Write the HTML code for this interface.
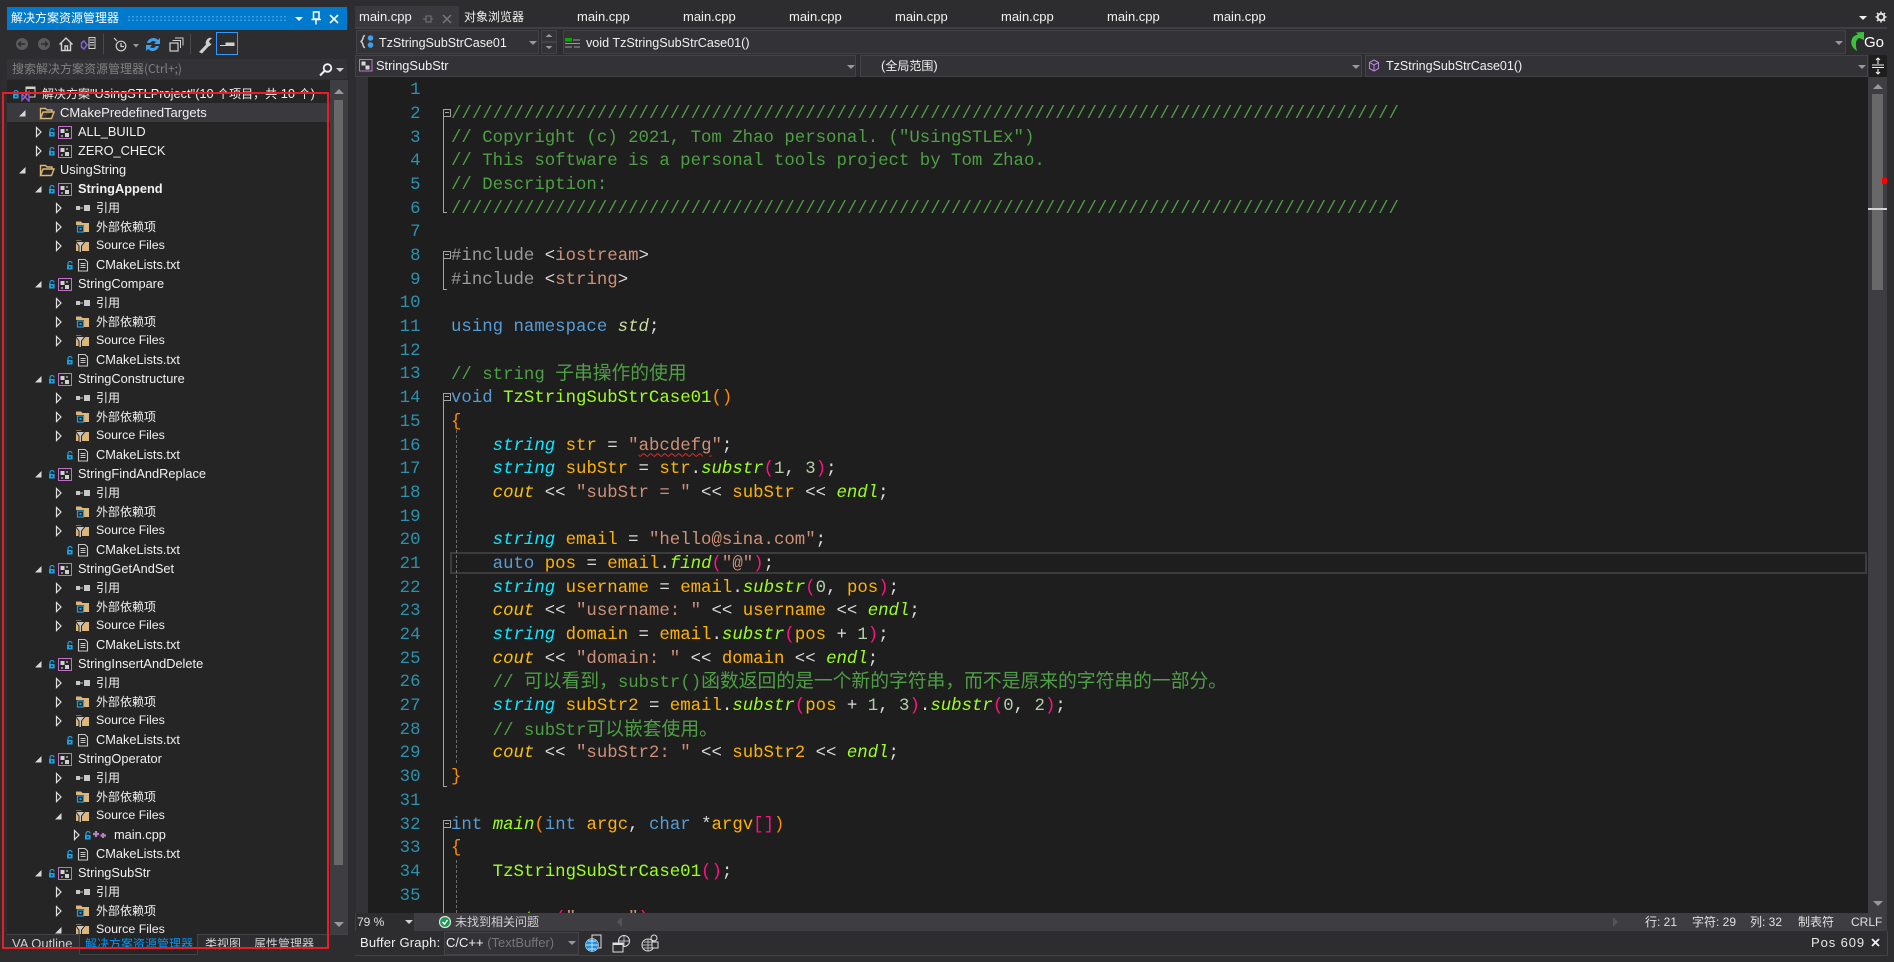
<!DOCTYPE html>
<html><head><meta charset="utf-8">
<style>
html,body{margin:0;padding:0;background:#2d2d30;width:1894px;height:962px;overflow:hidden}
body{position:relative;font:13px "Liberation Sans","Noto Sans CJK SC",sans-serif;color:#f1f1f1}
.a,.abs{position:absolute}
.z{font-family:"Noto Sans CJK SC",sans-serif;font-size:12px}
svg{position:absolute;overflow:visible}
.tx{position:absolute;white-space:pre;line-height:18px}
/* tree */
#tree{position:absolute;left:7px;top:80px;width:326px;height:854px;background:#252526;overflow:hidden}
#rows{position:absolute;left:-7px;top:4px;width:333px}
.r{position:relative;height:19px;line-height:19px;white-space:pre;font-size:12.8px}
.r svg{width:16px;height:16px;top:1.5px}
.r .T{position:absolute;top:0;color:#f1f1f1}
.A1 .A{left:30px}.A1 .K{left:44px}.A1 .I{left:57px}.A1 .T{left:78px}
.B1 .A{left:50px}.B1 .I{left:75px}.B1 .T{left:96px;font-size:12.4px}.B1 .z{font-size:12px}
.C1 .K{left:62px}.C1 .I{left:75px}.C1 .T{left:96px}
.F1 .A{left:14px}.F1 .I{left:39px}.F1 .T{left:60px}
.M1 .A{left:68px}.M1 .K{left:80px}.M1 .I{left:93px}.M1 .T{left:114px}
/* code */
#ed{position:absolute;left:368px;top:77px;width:1500px;height:836px;background:#1e1e1e;overflow:hidden}
#nums,#code{position:absolute;margin:0;top:2.2px;font:17.36px/23.7px "Liberation Mono","Noto Sans CJK SC",monospace}
#nums{left:0;width:52.5px;text-align:right;color:#2b91af}
#code{left:83px;color:#dcdcdc}
#code div{height:23.7px;white-space:pre}
#nums div{height:23.7px}
.c{color:#4e9f45}.t{color:#0fe6ff;font-style:italic}.v{color:#ffb300}.f{color:#9dff1f;font-style:italic}
.g{color:#9dff1f}.s{color:#ce9178}.k{color:#569cd6}.p{color:#ff1280}.q{color:#ff8c00}.o{color:#ffc000;font-style:italic}
.n{color:#b5cea8}.i{color:#9b9b9b}.d{color:#c8dca0;font-style:italic}.w{color:#dcdcdc}
.h{font-family:"Noto Sans CJK SC",sans-serif;font-size:18.8px;line-height:1}
.sq{text-decoration:underline wavy #e03030 1px;text-underline-offset:3px}
.bx{position:absolute;box-sizing:border-box;background:#333337;border:1px solid #434346}
.dd{position:absolute;width:0;height:0;border-left:4px solid transparent;border-right:4px solid transparent;border-top:4px solid #999}
.tab{position:absolute;top:8px;font-size:13px;line-height:18px}
.fb{position:absolute;left:75px;width:1px;background:#a5a5a5}
.tk{position:absolute;left:75px;width:4px;height:1px;background:#a5a5a5}
.fx{position:absolute;left:75px;box-sizing:border-box;width:8px;height:8px;border:1px solid #a5a5a5;background:#1e1e1e}
.fx:after{content:"";position:absolute;left:1px;top:2px;width:4px;height:1px;background:#a5a5a5}
.gd{position:absolute;left:88px;width:0;border-left:1px dashed #6e6e6e}
</style></head><body>
<svg width="0" height="0" style="position:absolute">
<defs>
<symbol id="ar" viewBox="0 0 16 16"><path d="M6.5 3.5L11 8L6.5 12.5Z" fill="none" stroke="#e0e0e0" stroke-width="1.2"/></symbol>
<symbol id="dn" viewBox="0 0 16 16"><path d="M11.5 5V11.5H5Z" fill="#d8d8d8"/></symbol>
<symbol id="lk" viewBox="0 0 16 16"><path d="M6 8.5V6.5a2 2 0 0 1 4 0" fill="none" stroke="#1ba1e2" stroke-width="1.2"/><rect x="5" y="8" width="5.6" height="4.5" fill="#1ba1e2"/><rect x="7" y="9.5" width="1.6" height="1.5" fill="#252526"/></symbol>
<symbol id="pj" viewBox="0 0 16 16"><rect x="1.5" y="2.5" width="13" height="12" fill="none" stroke="#c070c8" stroke-width="1"/><path d="M3.5 5h4v4h-4zM8 9h4v4H8z" fill="#d0d0d0"/><path d="M9 5h2v2H9zM4 11h2v2H4z" fill="#8a8a8a"/></symbol>
<symbol id="fo" viewBox="0 0 16 16"><path d="M1.5 13.5V3.5H6.5L8 5H13V7M1.5 13.5H12.5L15 7H4L1.5 13.5Z" fill="#252526" stroke="#dcb67a" stroke-width="1.4"/></symbol>
<symbol id="rf" viewBox="0 0 16 16"><rect x="1" y="6" width="4" height="4" fill="#c8c8c8"/><rect x="5" y="7.5" width="3" height="1" fill="#c8c8c8"/><rect x="9" y="5" width="6" height="6" fill="#c8c8c8"/></symbol>
<symbol id="ex" viewBox="0 0 16 16"><path d="M1 2.5H6L7.5 4H14V13H1Z" fill="#dcb67a"/><rect x="1" y="6" width="8" height="8" fill="#252526"/><rect x="2.5" y="7" width="6" height="6" fill="none" stroke="#1ba1e2" stroke-width="1.2"/><rect x="4.5" y="9" width="2" height="2" fill="#1ba1e2"/></symbol>
<symbol id="sf" viewBox="0 0 16 16"><path d="M1 2.5H6L7.5 4H14V13H1Z" fill="#dcb67a"/><path d="M0.5 3.5H10L6.5 8V14L4 15V8Z" fill="#c8c8c8" stroke="#252526" stroke-width="1"/></symbol>
<symbol id="fl" viewBox="0 0 16 16"><path d="M3.5 2.5H10L12.5 5V14H3.5Z" fill="none" stroke="#c8c8c8" stroke-width="1.1"/><path d="M5.5 6.5H10.5M5.5 8.5H10.5M5.5 10.5H10.5" stroke="#c8c8c8" stroke-width="1"/></symbol>
<symbol id="cp" viewBox="0 0 16 16"><path d="M3 4V10M0 7H6M10 6V11M7.5 8.5H13" stroke="#b77fc0" stroke-width="2.2" fill="none"/></symbol>
<symbol id="so" viewBox="0 0 16 16"><rect x="6" y="1" width="9" height="10" fill="none" stroke="#d0d0d0"/><rect x="6" y="1" width="9" height="2" fill="#d0d0d0"/><path d="M2 8L5 11L9 6V15L5 11L2 14Z" fill="#252526" stroke="#8a5fd0" stroke-width="1.4"/></symbol>
</defs></svg>

<!-- Solution explorer title -->
<div class="abs" style="left:7px;top:7px;width:340px;height:23px;background:#007acc"></div>
<div class="tx z" style="left:11px;top:9px;color:#fff">解决方案资源管理器</div>
<div class="abs" style="left:127px;top:15px;width:160px;height:7px;background-image:radial-gradient(#4aa6e0 0.8px,transparent 1px);background-size:4px 3.5px"></div>
<div class="dd" style="left:295px;top:17px;border-top-color:#fff;border-left-width:4px;border-right-width:4px"></div>
<svg style="left:310px;top:11px" width="12" height="14"><path d="M3.5 1H9V8H3.5ZM1.5 8.5H11M6 9V13.5" fill="none" stroke="#fff" stroke-width="1.5"/></svg>
<svg style="left:329px;top:14px" width="10" height="10"><path d="M1 1L9 9M9 1L1 9" stroke="#fff" stroke-width="1.6"/></svg>

<!-- toolbar -->
<svg style="left:0;top:30px" width="240" height="26">
<circle cx="22" cy="14" r="6" fill="#5a5a5c"/><path d="M25 14H19M21 11.5L18.5 14L21 16.5" stroke="#2d2d30" stroke-width="1.4" fill="none"/>
<circle cx="44" cy="14" r="6" fill="#5a5a5c"/><path d="M41 14H47M45 11.5L47.5 14L45 16.5" stroke="#2d2d30" stroke-width="1.4" fill="none"/>
<path d="M59.5 14.5L66 8L72.5 14.5M61.5 13V20.5H70.5V13M65 20.5V16H67.5V20.5" fill="none" stroke="#d0d0d0" stroke-width="1.4"/>
<path d="M84 11L87 15L84 19L81.5 17V13Z" fill="none" stroke="#8a5fd0" stroke-width="1.5"/><path d="M88 15L92 11V19Z" fill="#8a5fd0"/><rect x="89" y="7.500" width="6" height="11" fill="#2d2d30" stroke="#d0d0d0"/><path d="M90 10H94M90 12.500H94M90 15H94" stroke="#d0d0d0"/>
<rect x="103" y="4" width="1" height="20" fill="#4a4a4e"/>
<circle cx="121" cy="16" r="4.800" fill="none" stroke="#d0d0d0" stroke-width="1.200"/><path d="M121 13V16.500H124M114 8L117 11" stroke="#d0d0d0" stroke-width="1.200" fill="none"/>
<path d="M133 14H139L136 17.500Z" fill="#999"/>
<path d="M147 13A6.500 6.500 0 0 1 158 10L160 8V14H154L156 12A4 4 0 0 0 150 13ZM159 16A6.500 6.500 0 0 1 148 19L146 21V15H152L150 17A4 4 0 0 0 156 16Z" fill="#3f9fe8"/>
<rect x="170" y="13" width="8" height="8" fill="none" stroke="#d0d0d0" stroke-width="1.200"/><path d="M172.500 10.500H180.500V18" fill="none" stroke="#d0d0d0"/><path d="M175 8H183V15.500" fill="none" stroke="#d0d0d0"/>
<rect x="190" y="4" width="1" height="20" fill="#4a4a4e"/>
<path d="M199 22L206 14.500A5 5 0 0 1 212 8L209 11L210 13.500L212.500 14L211.500 14A5 5 0 0 1 208.500 16.500L202 23.500Z" fill="#cfcfcf"/>
<rect x="216.500" y="2.500" width="21" height="22" fill="none" stroke="#3399ff" stroke-width="1"/>
<path d="M220 15.500H234V13H226V15" fill="#d0d0d0" stroke="#d0d0d0"/>
</svg>

<!-- search -->
<div class="abs" style="left:7px;top:59px;width:340px;height:20px;background:#333337"></div>
<div class="tx z" style="left:12px;top:60px;color:#808080">搜索解决方案资源管理器(Ctrl+;)</div>
<svg style="left:318px;top:62px" width="16" height="16"><circle cx="9.500" cy="6" r="3.800" fill="none" stroke="#f0f0f0" stroke-width="1.800"/><path d="M6.500 9L2 13.500" stroke="#f0f0f0" stroke-width="2"/></svg>
<div class="dd" style="left:336px;top:68px;border-top-color:#d0d0d0"></div>

<!-- tree -->
<div id="tree"><div id="rows">
<div class="r" style="height:19px"><svg style="left:8px"><use href="#lk"/></svg><svg style="left:20px"><use href="#so"/></svg><span class="T" style="left:42px"><span class="z">解决方案</span>"UsingSTLProject"(10 <span class="z">个项目，共</span> 10 <span class="z">个</span>)</span></div>
<div class="r F1" style="background:#3a3a3e"><svg class="A"><use href="#dn"/></svg><svg class="I"><use href="#fo"/></svg><span class="T" style="font-size:13px">CMakePredefinedTargets</span></div>
<div class="r A1"><svg class="A"><use href="#ar"/></svg><svg class="K"><use href="#lk"/></svg><svg class="I"><use href="#pj"/></svg><span class="T">ALL_BUILD</span></div>
<div class="r A1"><svg class="A"><use href="#ar"/></svg><svg class="K"><use href="#lk"/></svg><svg class="I"><use href="#pj"/></svg><span class="T">ZERO_CHECK</span></div>
<div class="r F1"><svg class="A"><use href="#dn"/></svg><svg class="I"><use href="#fo"/></svg><span class="T">UsingString</span></div>

<div class="r A1"><svg class="A"><use href="#dn"/></svg><svg class="K"><use href="#lk"/></svg><svg class="I"><use href="#pj"/></svg><span class="T"><b>StringAppend</b></span></div>
<div class="r B1"><svg class="A"><use href="#ar"/></svg><svg class="I"><use href="#rf"/></svg><span class="T z">引用</span></div>
<div class="r B1"><svg class="A"><use href="#ar"/></svg><svg class="I"><use href="#ex"/></svg><span class="T z">外部依赖项</span></div>
<div class="r B1"><svg class="A"><use href="#ar"/></svg><svg class="I"><use href="#sf"/></svg><span class="T">Source Files</span></div>
<div class="r C1"><svg class="K"><use href="#lk"/></svg><svg class="I"><use href="#fl"/></svg><span class="T">CMakeLists.txt</span></div>

<div class="r A1"><svg class="A"><use href="#dn"/></svg><svg class="K"><use href="#lk"/></svg><svg class="I"><use href="#pj"/></svg><span class="T">StringCompare</span></div>
<div class="r B1"><svg class="A"><use href="#ar"/></svg><svg class="I"><use href="#rf"/></svg><span class="T z">引用</span></div>
<div class="r B1"><svg class="A"><use href="#ar"/></svg><svg class="I"><use href="#ex"/></svg><span class="T z">外部依赖项</span></div>
<div class="r B1"><svg class="A"><use href="#ar"/></svg><svg class="I"><use href="#sf"/></svg><span class="T">Source Files</span></div>
<div class="r C1"><svg class="K"><use href="#lk"/></svg><svg class="I"><use href="#fl"/></svg><span class="T">CMakeLists.txt</span></div>

<div class="r A1"><svg class="A"><use href="#dn"/></svg><svg class="K"><use href="#lk"/></svg><svg class="I"><use href="#pj"/></svg><span class="T">StringConstructure</span></div>
<div class="r B1"><svg class="A"><use href="#ar"/></svg><svg class="I"><use href="#rf"/></svg><span class="T z">引用</span></div>
<div class="r B1"><svg class="A"><use href="#ar"/></svg><svg class="I"><use href="#ex"/></svg><span class="T z">外部依赖项</span></div>
<div class="r B1"><svg class="A"><use href="#ar"/></svg><svg class="I"><use href="#sf"/></svg><span class="T">Source Files</span></div>
<div class="r C1"><svg class="K"><use href="#lk"/></svg><svg class="I"><use href="#fl"/></svg><span class="T">CMakeLists.txt</span></div>

<div class="r A1"><svg class="A"><use href="#dn"/></svg><svg class="K"><use href="#lk"/></svg><svg class="I"><use href="#pj"/></svg><span class="T">StringFindAndReplace</span></div>
<div class="r B1"><svg class="A"><use href="#ar"/></svg><svg class="I"><use href="#rf"/></svg><span class="T z">引用</span></div>
<div class="r B1"><svg class="A"><use href="#ar"/></svg><svg class="I"><use href="#ex"/></svg><span class="T z">外部依赖项</span></div>
<div class="r B1"><svg class="A"><use href="#ar"/></svg><svg class="I"><use href="#sf"/></svg><span class="T">Source Files</span></div>
<div class="r C1"><svg class="K"><use href="#lk"/></svg><svg class="I"><use href="#fl"/></svg><span class="T">CMakeLists.txt</span></div>

<div class="r A1"><svg class="A"><use href="#dn"/></svg><svg class="K"><use href="#lk"/></svg><svg class="I"><use href="#pj"/></svg><span class="T">StringGetAndSet</span></div>
<div class="r B1"><svg class="A"><use href="#ar"/></svg><svg class="I"><use href="#rf"/></svg><span class="T z">引用</span></div>
<div class="r B1"><svg class="A"><use href="#ar"/></svg><svg class="I"><use href="#ex"/></svg><span class="T z">外部依赖项</span></div>
<div class="r B1"><svg class="A"><use href="#ar"/></svg><svg class="I"><use href="#sf"/></svg><span class="T">Source Files</span></div>
<div class="r C1"><svg class="K"><use href="#lk"/></svg><svg class="I"><use href="#fl"/></svg><span class="T">CMakeLists.txt</span></div>

<div class="r A1"><svg class="A"><use href="#dn"/></svg><svg class="K"><use href="#lk"/></svg><svg class="I"><use href="#pj"/></svg><span class="T">StringInsertAndDelete</span></div>
<div class="r B1"><svg class="A"><use href="#ar"/></svg><svg class="I"><use href="#rf"/></svg><span class="T z">引用</span></div>
<div class="r B1"><svg class="A"><use href="#ar"/></svg><svg class="I"><use href="#ex"/></svg><span class="T z">外部依赖项</span></div>
<div class="r B1"><svg class="A"><use href="#ar"/></svg><svg class="I"><use href="#sf"/></svg><span class="T">Source Files</span></div>
<div class="r C1"><svg class="K"><use href="#lk"/></svg><svg class="I"><use href="#fl"/></svg><span class="T">CMakeLists.txt</span></div>

<div class="r A1"><svg class="A"><use href="#dn"/></svg><svg class="K"><use href="#lk"/></svg><svg class="I"><use href="#pj"/></svg><span class="T">StringOperator</span></div>
<div class="r B1"><svg class="A"><use href="#ar"/></svg><svg class="I"><use href="#rf"/></svg><span class="T z">引用</span></div>
<div class="r B1"><svg class="A"><use href="#ar"/></svg><svg class="I"><use href="#ex"/></svg><span class="T z">外部依赖项</span></div>
<div class="r B1"><svg class="A"><use href="#dn"/></svg><svg class="I"><use href="#sf"/></svg><span class="T">Source Files</span></div>
<div class="r M1"><svg class="A"><use href="#ar"/></svg><svg class="K"><use href="#lk"/></svg><svg class="I"><use href="#cp"/></svg><span class="T">main.cpp</span></div>
<div class="r C1"><svg class="K"><use href="#lk"/></svg><svg class="I"><use href="#fl"/></svg><span class="T">CMakeLists.txt</span></div>

<div class="r A1"><svg class="A"><use href="#dn"/></svg><svg class="K"><use href="#lk"/></svg><svg class="I"><use href="#pj"/></svg><span class="T">StringSubStr</span></div>
<div class="r B1"><svg class="A"><use href="#ar"/></svg><svg class="I"><use href="#rf"/></svg><span class="T z">引用</span></div>
<div class="r B1"><svg class="A"><use href="#ar"/></svg><svg class="I"><use href="#ex"/></svg><span class="T z">外部依赖项</span></div>
<div class="r B1"><svg class="A"><use href="#dn"/></svg><svg class="I"><use href="#sf"/></svg><span class="T">Source Files</span></div>
</div></div>

<!-- left scrollbar -->
<div class="abs" style="left:330px;top:80px;width:18px;height:854px;background:#3e3e42"></div>
<div class="abs" style="left:334px;top:100px;width:9px;height:765px;background:#686868"></div>
<svg style="left:333px;top:87px" width="12" height="8"><path d="M1 7L6 2L11 7Z" fill="#999"/></svg>
<svg style="left:333px;top:921px" width="12" height="8"><path d="M1 1L6 6L11 1Z" fill="#999"/></svg>

<!-- bottom tabs -->
<div class="abs" style="left:7px;top:934px;width:341px;height:1px;background:#434346"></div>
<div class="abs" style="left:79px;top:934px;width:119px;height:21px;box-sizing:border-box;border:1px solid #434346;border-top:none;background:#252526"></div>
<div class="tx" style="left:12px;top:935px;color:#d0d0d0">VA Outline</div>
<div class="tx z" style="left:85px;top:935px;color:#0097fb">解决方案资源管理器</div>
<div class="tx z" style="left:205px;top:935px;color:#d0d0d0">类视图</div>
<div class="tx z" style="left:254px;top:935px;color:#d0d0d0">属性管理器</div>

<!-- editor tabs -->
<div class="abs" style="left:355px;top:6px;width:104px;height:21px;background:#3a3a3e"></div>
<div class="tab" style="left:359px">main.cpp</div>
<svg style="left:422px;top:13px" width="12" height="12"><path d="M1 6H4M4 3H9V9H4ZM9 6H11" fill="none" stroke="#777" stroke-width="1"/></svg>
<svg style="left:442px;top:14px" width="10" height="10"><path d="M1 1L9 9M9 1L1 9" stroke="#777" stroke-width="1.500"/></svg>
<div class="tab z" style="left:464px;font-size:12px">对象浏览器</div>
<div class="tab" style="left:577px">main.cpp</div>
<div class="tab" style="left:683px">main.cpp</div>
<div class="tab" style="left:789px">main.cpp</div>
<div class="tab" style="left:895px">main.cpp</div>
<div class="tab" style="left:1001px">main.cpp</div>
<div class="tab" style="left:1107px">main.cpp</div>
<div class="tab" style="left:1213px">main.cpp</div>
<div class="dd" style="left:1859px;top:16px;border-top-color:#f0f0f0"></div>
<svg style="left:1875px;top:11px" width="12" height="12"><circle cx="6" cy="6" r="3.300" fill="none" stroke="#e0e0e0" stroke-width="2"/><path d="M6 0.500V2.500M6 9.500V11.500M0.500 6H2.500M9.500 6H11.500M2 2L3.500 3.500M8.500 8.500L10 10M10 2L8.500 3.500M3.500 8.500L2 10" stroke="#e0e0e0" stroke-width="1.600"/></svg>
<div class="abs" style="left:355px;top:27px;width:1532px;height:2px;background:#3f3f46"></div>

<!-- nav row 1 -->
<div class="bx" style="left:356px;top:30px;width:183px;height:24px"></div>
<svg style="left:359px;top:34px" width="18" height="16"><path d="M6 1.500C3 1.500 5 7 1.500 7.500C5 8 3 13.500 6 13.500" fill="none" stroke="#d0d0d0" stroke-width="1.500"/><circle cx="11.500" cy="4" r="2.800" fill="#3f9fe8"/><circle cx="11.500" cy="11" r="2.800" fill="#3f9fe8"/></svg>
<div class="tx" style="left:379px;top:34px;color:#f1f1f1;font-size:12.5px">TzStringSubStrCase01</div>
<div class="dd" style="left:529px;top:41px"></div>
<div class="bx" style="left:541px;top:30px;width:16px;height:12px"></div>
<div class="bx" style="left:541px;top:42px;width:16px;height:12px"></div>
<svg style="left:545px;top:33px" width="8" height="18"><path d="M0.500 4L4 1L7.500 4ZM0.500 13H7.500L4 16Z" fill="#999"/></svg>
<div class="bx" style="left:563px;top:30px;width:1283px;height:24px"></div>
<svg style="left:565px;top:38px" width="16" height="10"><rect x="0.500" y="0.500" width="6" height="2.500" fill="#0a0" stroke="#0a0"/><path d="M8 2H15M0 5.500H15M0 9H7M9 9H15" stroke="#999" stroke-width="1"/></svg>
<div class="tx" style="left:586px;top:34px;color:#f1f1f1;font-size:12.6px">void TzStringSubStrCase01()</div>
<div class="dd" style="left:1835px;top:41px"></div>
<svg style="left:1849px;top:31px" width="16" height="22"><path d="M15 1L15 9L10 7C7 9 6 12 8 20C3 17 1 12 3 8C4 5 7 4 9 3.500L7 1.500Z" fill="#3cc33c"/></svg>
<div class="tx" style="left:1864px;top:34px;color:#fff;font-size:15px">Go</div>

<!-- nav row 2 -->
<div class="bx" style="left:355px;top:55px;width:501px;height:22px"></div>
<svg style="left:359px;top:59px" width="14" height="13"><rect x="0.500" y="0.500" width="12.500" height="11.500" fill="none" stroke="#c070c8"/><path d="M2.500 2.500h4v4h-4zM6.500 6.500h4v4h-4z" fill="#d8d8d8"/></svg>
<div class="tx" style="left:376px;top:57px;color:#f1f1f1;font-size:12.8px">StringSubStr</div>
<div class="dd" style="left:847px;top:65px"></div>
<div class="bx" style="left:860px;top:55px;width:502px;height:22px"></div>
<div class="tx" style="left:881px;top:57px;color:#f1f1f1">(<span class="z">全局范围</span>)</div>
<div class="dd" style="left:1352px;top:65px"></div>
<div class="bx" style="left:1365px;top:55px;width:503px;height:22px"></div>
<svg style="left:1368px;top:59px" width="12" height="14"><path d="M6 1L10.500 3.500V9.500L6 12L1.500 9.500V3.500ZM1.500 3.500L6 6L10.500 3.500M6 6V12" fill="none" stroke="#b180d7" stroke-width="1.100"/></svg>
<div class="tx" style="left:1386px;top:57px;color:#f1f1f1;font-size:12.5px">TzStringSubStrCase01()</div>
<div class="dd" style="left:1858px;top:65px"></div>
<div class="abs" style="left:1869px;top:55px;width:18px;height:22px;background:#1e1e1e"></div>
<svg style="left:1871px;top:57px" width="14" height="18"><path d="M1 8H13M1 10.500H13M7 1V7M5 3L7 1L9 3M7 12V17M5 15L7 17L9 15" fill="none" stroke="#f0f0f0" stroke-width="1.100"/></svg>

<!-- gutter -->
<div class="abs" style="left:356px;top:77px;width:12px;height:836px;background:#333337"></div>

<!-- editor -->
<div id="ed">
<div class="abs" style="left:82px;top:474.600px;width:1417px;height:22px;box-sizing:border-box;border:2px solid #3c3c3e"></div>
<div id="nums"><div>1</div><div>2</div><div>3</div><div>4</div><div>5</div><div>6</div><div>7</div><div>8</div><div>9</div><div>10</div><div>11</div><div>12</div><div>13</div><div>14</div><div>15</div><div>16</div><div>17</div><div>18</div><div>19</div><div>20</div><div>21</div><div>22</div><div>23</div><div>24</div><div>25</div><div>26</div><div>27</div><div>28</div><div>29</div><div>30</div><div>31</div><div>32</div><div>33</div><div>34</div><div>35</div></div>
<div id="code">
<div> </div>
<div class="c">///////////////////////////////////////////////////////////////////////////////////////////</div>
<div class="c">// Copyright (c) 2021, Tom Zhao personal. ("UsingSTLEx")</div>
<div class="c">// This software is a personal tools project by Tom Zhao.</div>
<div class="c">// Description:</div>
<div class="c">///////////////////////////////////////////////////////////////////////////////////////////</div>
<div> </div>
<div><span class="i">#include</span> <span class="w">&lt;</span><span class="s">iostream</span><span class="w">&gt;</span></div>
<div><span class="i">#include</span> <span class="w">&lt;</span><span class="s">string</span><span class="w">&gt;</span></div>
<div> </div>
<div><span class="k">using namespace</span> <span class="d">std</span>;</div>
<div> </div>
<div class="c">// string <span class="h">子串操作的使用</span></div>
<div><span class="k">void</span> <span class="g">TzStringSubStrCase01</span><span class="q">()</span></div>
<div><span class="q">{</span></div>
<div>    <span class="t">string</span> <span class="v">str</span> = <span class="s">"<span class="sq">abcdefg</span>"</span>;</div>
<div>    <span class="t">string</span> <span class="v">subStr</span> = <span class="v">str</span>.<span class="f">substr</span><span class="p">(</span><span class="n">1</span>, <span class="n">3</span><span class="p">)</span>;</div>
<div>    <span class="o">cout</span> &lt;&lt; <span class="s">"subStr = "</span> &lt;&lt; <span class="v">subStr</span> &lt;&lt; <span class="f">endl</span>;</div>
<div> </div>
<div>    <span class="t">string</span> <span class="v">email</span> = <span class="s">"hello@sina.com"</span>;</div>
<div>    <span class="k">auto</span> <span class="v">pos</span> = <span class="v">email</span>.<span class="f">find</span><span class="p">(</span><span class="s">"@"</span><span class="p">)</span>;</div>
<div>    <span class="t">string</span> <span class="v">username</span> = <span class="v">email</span>.<span class="f">substr</span><span class="p">(</span><span class="n">0</span>, <span class="v">pos</span><span class="p">)</span>;</div>
<div>    <span class="o">cout</span> &lt;&lt; <span class="s">"username: "</span> &lt;&lt; <span class="v">username</span> &lt;&lt; <span class="f">endl</span>;</div>
<div>    <span class="t">string</span> <span class="v">domain</span> = <span class="v">email</span>.<span class="f">substr</span><span class="p">(</span><span class="v">pos</span> + <span class="n">1</span><span class="p">)</span>;</div>
<div>    <span class="o">cout</span> &lt;&lt; <span class="s">"domain: "</span> &lt;&lt; <span class="v">domain</span> &lt;&lt; <span class="f">endl</span>;</div>
<div class="c">    // <span class="h">可以看到，</span>substr()<span class="h">函数返回的是一个新的字符串，而不是原来的字符串的一部分。</span></div>
<div>    <span class="t">string</span> <span class="v">subStr2</span> = <span class="v">email</span>.<span class="f">substr</span><span class="p">(</span><span class="v">pos</span> + <span class="n">1</span>, <span class="n">3</span><span class="p">)</span>.<span class="f">substr</span><span class="p">(</span><span class="n">0</span>, <span class="n">2</span><span class="p">)</span>;</div>
<div class="c">    // subStr<span class="h">可以嵌套使用。</span></div>
<div>    <span class="o">cout</span> &lt;&lt; <span class="s">"subStr2: "</span> &lt;&lt; <span class="v">subStr2</span> &lt;&lt; <span class="f">endl</span>;</div>
<div><span class="q">}</span></div>
<div> </div>
<div><span class="k">int</span> <span class="f">main</span><span class="q">(</span><span class="k">int</span> <span class="v">argc</span>, <span class="k">char</span> *<span class="v">argv</span><span class="p">[]</span><span class="q">)</span></div>
<div><span class="q">{</span></div>
<div>    <span class="g">TzStringSubStrCase01</span><span class="p">()</span>;</div>
<div> </div>
<div>    <span class="f">system</span><span class="p">(</span><span class="s">"pause"</span><span class="p">)</span>;</div>
</div>
<!-- fold markers -->
<div class="fb" style="top:40px;height:95px"></div><div class="tk" style="top:135px"></div>
<div class="fb" style="top:182px;height:30px"></div><div class="tk" style="top:212px"></div>
<div class="fb" style="top:324px;height:385px"></div><div class="tk" style="top:709px"></div>
<div class="fb" style="top:750px;height:90px"></div>
<div class="fx" style="top:32px"></div>
<div class="fx" style="top:174px"></div>
<div class="fx" style="top:316px"></div>
<div class="fx" style="top:743px"></div>
<div class="gd" style="top:353px;height:333px"></div>
<div class="gd" style="top:783px;height:53px"></div>
</div>

<!-- right scrollbar -->
<div class="abs" style="left:1868px;top:77px;width:19px;height:836px;background:#3e3e42"></div>
<div class="abs" style="left:1872px;top:94px;width:11px;height:196px;background:#686868"></div>
<svg style="left:1872px;top:82px" width="12" height="8"><path d="M1 7L6 2L11 7Z" fill="#999"/></svg>
<svg style="left:1872px;top:900px" width="12" height="8"><path d="M1 1L6 6L11 1Z" fill="#999"/></svg>
<div class="abs" style="left:1868px;top:208px;width:19px;height:2px;background:#d4d4d4"></div>
<div class="abs" style="left:1882px;top:178px;width:5px;height:6px;background:#f00"></div>

<!-- status bar -->
<div class="abs" style="left:355px;top:913px;width:1532px;height:18px;background:#3e3e42"></div>
<div class="abs" style="left:356px;top:913px;width:58px;height:18px;background:#2d2d30"></div>
<div class="tx" style="left:357px;top:913px;font-size:12px;color:#e0e0e0">79 %</div>
<div class="dd" style="left:405px;top:920px;border-top-color:#d0d0d0"></div>
<svg style="left:438px;top:915px" width="14" height="15"><circle cx="7" cy="7" r="5.500" fill="#1a9a50" stroke="#e0e0e0" stroke-width="1.200"/><path d="M4.500 7L6.500 9L9.500 5" fill="none" stroke="#fff" stroke-width="1.400"/></svg>
<div class="tx z" style="left:455px;top:913px;color:#d0d0d0">未找到相关问题</div>
<svg style="left:616px;top:917px" width="8" height="10"><path d="M6 0L1 5L6 10Z" fill="#555558"/></svg>
<svg style="left:1612px;top:917px" width="8" height="10"><path d="M1 0L6 5L1 10Z" fill="#555558"/></svg>
<div class="tx" style="left:1645px;top:913px;font-size:12px;color:#e0e0e0"><span class="z">行</span>: 21</div>
<div class="tx" style="left:1692px;top:913px;font-size:12px;color:#e0e0e0"><span class="z">字符</span>: 29</div>
<div class="tx" style="left:1750px;top:913px;font-size:12px;color:#e0e0e0"><span class="z">列</span>: 32</div>
<div class="tx z" style="left:1798px;top:913px;color:#e0e0e0">制表符</div>
<div class="tx" style="left:1851px;top:913px;font-size:12px;color:#e0e0e0">CRLF</div>

<!-- buffer graph -->
<div class="abs" style="left:355px;top:955px;width:1533px;height:1px;background:#434346"></div>
<div class="abs" style="left:1887px;top:931px;width:1px;height:24px;background:#434346"></div>
<div class="tx" style="left:360px;top:934px;color:#f1f1f1;letter-spacing:.2px">Buffer Graph:</div>
<div class="bx" style="left:444px;top:932px;width:135px;height:23px"></div>
<div class="tx" style="left:446px;top:934px;color:#f1f1f1">C/C++ <span style="color:#777">(TextBuffer)</span></div>
<div class="dd" style="left:568px;top:941px"></div>
<svg style="left:584px;top:934px" width="20" height="20"><rect x="8" y="1" width="9" height="13" fill="#2d2d30" stroke="#e0e0e0"/><circle cx="8" cy="11" r="6.500" fill="#1e90e0" stroke="#e0e0e0" stroke-width="0.600"/><path d="M2 11H14M8 4.500V17.500M4 7H12M4 15H12" stroke="#fff" stroke-width="0.700"/></svg>
<svg style="left:612px;top:934px" width="20" height="20"><circle cx="12" cy="7" r="5.500" fill="#2d2d30" stroke="#e0e0e0"/><path d="M7 7H17M12 2V12" stroke="#e0e0e0" stroke-width="0.700"/><rect x="1" y="9" width="10" height="9" fill="#2d2d30" stroke="#e0e0e0"/><rect x="1" y="9" width="10" height="2" fill="#e0e0e0"/></svg>
<svg style="left:640px;top:934px" width="20" height="20"><circle cx="8" cy="11" r="6" fill="#2d2d30" stroke="#e0e0e0"/><path d="M2 11H14M8 5V17M4 8H12M4 14H12" stroke="#e0e0e0" stroke-width="0.700"/><circle cx="14" cy="4" r="3" fill="#2d2d30" stroke="#e0e0e0"/><rect x="12" y="8" width="6" height="6" fill="#2d2d30" stroke="#e0e0e0"/></svg>
<div class="tx" style="left:1811px;top:934px;color:#e8e8e8;letter-spacing:.9px">Pos 609</div>
<svg style="left:1871px;top:938px" width="9" height="9"><path d="M1 1L8 8M8 1L1 8" stroke="#f0f0f0" stroke-width="1.800"/></svg>

<!-- red annotation -->
<div class="abs" style="left:2px;top:92px;width:327px;height:857px;box-sizing:border-box;border:2px solid #ed1c24"></div>
</body></html>
